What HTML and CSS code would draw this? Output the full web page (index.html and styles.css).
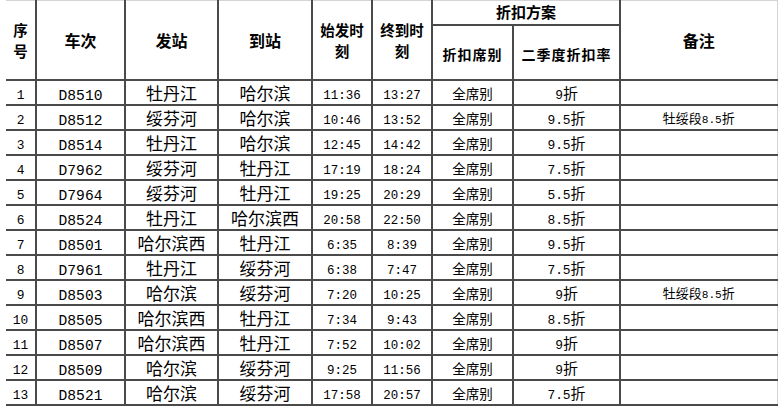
FILE: index.html
```html
<!DOCTYPE html>
<html lang="zh-CN">
<head>
<meta charset="utf-8">
<title>折扣方案</title>
<link rel="stylesheet" href="styles.css">
</head>
<body>
<table class="sheet">
  <colgroup>
    <col class="c1"><col class="c2"><col class="c3"><col class="c4"><col class="c5"><col class="c6"><col class="c7"><col class="c8"><col class="c9">
  </colgroup>
  <thead>
    <tr class="h1">
      <th rowspan="2" class="first two">序<br>号</th>
      <th rowspan="2">车次</th>
      <th rowspan="2">发站</th>
      <th rowspan="2">到站</th>
      <th rowspan="2" class="two">始发时<br>刻</th>
      <th rowspan="2" class="two">终到时<br>刻</th>
      <th colspan="2" class="plan">折扣方案</th>
      <th rowspan="2" class="last">备注</th>
    </tr>
    <tr class="h2">
      <th class="sub">折扣席别</th>
      <th class="sub">二季度折扣率</th>
    </tr>
  </thead>
  <tbody>
    <tr><td class="first seq"><span class="m">1</span></td><td class="big"><span class="m">D8510</span></td><td class="big">牡丹江</td><td class="big">哈尔滨</td><td class="time"><span class="m">11:36</span></td><td class="time"><span class="m">13:27</span></td><td class="seat">全席别</td><td class="rate"><span class="m">9</span>折</td><td class="last note"></td></tr>
    <tr><td class="first seq"><span class="m">2</span></td><td class="big"><span class="m">D8512</span></td><td class="big">绥芬河</td><td class="big">哈尔滨</td><td class="time"><span class="m">10:46</span></td><td class="time"><span class="m">13:52</span></td><td class="seat">全席别</td><td class="rate"><span class="m">9.5</span>折</td><td class="last note">牡绥段<span class="m">8.5</span>折</td></tr>
    <tr><td class="first seq"><span class="m">3</span></td><td class="big"><span class="m">D8514</span></td><td class="big">牡丹江</td><td class="big">哈尔滨</td><td class="time"><span class="m">12:45</span></td><td class="time"><span class="m">14:42</span></td><td class="seat">全席别</td><td class="rate"><span class="m">9.5</span>折</td><td class="last note"></td></tr>
    <tr><td class="first seq"><span class="m">4</span></td><td class="big"><span class="m">D7962</span></td><td class="big">绥芬河</td><td class="big">牡丹江</td><td class="time"><span class="m">17:19</span></td><td class="time"><span class="m">18:24</span></td><td class="seat">全席别</td><td class="rate"><span class="m">7.5</span>折</td><td class="last note"></td></tr>
    <tr><td class="first seq"><span class="m">5</span></td><td class="big"><span class="m">D7964</span></td><td class="big">绥芬河</td><td class="big">牡丹江</td><td class="time"><span class="m">19:25</span></td><td class="time"><span class="m">20:29</span></td><td class="seat">全席别</td><td class="rate"><span class="m">5.5</span>折</td><td class="last note"></td></tr>
    <tr><td class="first seq"><span class="m">6</span></td><td class="big"><span class="m">D8524</span></td><td class="big">牡丹江</td><td class="big">哈尔滨西</td><td class="time"><span class="m">20:58</span></td><td class="time"><span class="m">22:50</span></td><td class="seat">全席别</td><td class="rate"><span class="m">8.5</span>折</td><td class="last note"></td></tr>
    <tr><td class="first seq"><span class="m">7</span></td><td class="big"><span class="m">D8501</span></td><td class="big">哈尔滨西</td><td class="big">牡丹江</td><td class="time"><span class="m">6:35</span></td><td class="time"><span class="m">8:39</span></td><td class="seat">全席别</td><td class="rate"><span class="m">9.5</span>折</td><td class="last note"></td></tr>
    <tr><td class="first seq"><span class="m">8</span></td><td class="big"><span class="m">D7961</span></td><td class="big">牡丹江</td><td class="big">绥芬河</td><td class="time"><span class="m">6:38</span></td><td class="time"><span class="m">7:47</span></td><td class="seat">全席别</td><td class="rate"><span class="m">7.5</span>折</td><td class="last note"></td></tr>
    <tr><td class="first seq"><span class="m">9</span></td><td class="big"><span class="m">D8503</span></td><td class="big">哈尔滨</td><td class="big">绥芬河</td><td class="time"><span class="m">7:20</span></td><td class="time"><span class="m">10:25</span></td><td class="seat">全席别</td><td class="rate"><span class="m">9</span>折</td><td class="last note">牡绥段<span class="m">8.5</span>折</td></tr>
    <tr><td class="first seq"><span class="m">10</span></td><td class="big"><span class="m">D8505</span></td><td class="big">哈尔滨西</td><td class="big">牡丹江</td><td class="time"><span class="m">7:34</span></td><td class="time"><span class="m">9:43</span></td><td class="seat">全席别</td><td class="rate"><span class="m">8.5</span>折</td><td class="last note"></td></tr>
    <tr><td class="first seq"><span class="m">11</span></td><td class="big"><span class="m">D8507</span></td><td class="big">哈尔滨西</td><td class="big">牡丹江</td><td class="time"><span class="m">7:52</span></td><td class="time"><span class="m">10:02</span></td><td class="seat">全席别</td><td class="rate"><span class="m">9</span>折</td><td class="last note"></td></tr>
    <tr><td class="first seq"><span class="m">12</span></td><td class="big"><span class="m">D8509</span></td><td class="big">哈尔滨</td><td class="big">绥芬河</td><td class="time"><span class="m">9:25</span></td><td class="time"><span class="m">11:56</span></td><td class="seat">全席别</td><td class="rate"><span class="m">9</span>折</td><td class="last note"></td></tr>
    <tr><td class="first seq"><span class="m">13</span></td><td class="big"><span class="m">D8521</span></td><td class="big">哈尔滨</td><td class="big">绥芬河</td><td class="time"><span class="m">17:58</span></td><td class="time"><span class="m">20:57</span></td><td class="seat">全席别</td><td class="rate"><span class="m">7.5</span>折</td><td class="last note"></td></tr>
  </tbody>
</table>
</body>
</html>
```

FILE: styles.css
```css
html, body {
  margin: 0;
  padding: 0;
  background: #ffffff;
}

body {
  font-family: "Noto Sans CJK SC", sans-serif;
  color: #111111;
}

.sheet {
  margin-left: 6px;
  border-collapse: collapse;
  table-layout: fixed;
  width: 771px;
}

.c1 { width: 30px; }
.c2 { width: 89px; }
.c3 { width: 93px; }
.c4 { width: 94px; }
.c5 { width: 60px; }
.c6 { width: 60px; }
.c7 { width: 81px; }
.c8 { width: 107px; }
.c9 { width: 157px; }

.sheet th,
.sheet td {
  border: 2px solid #4a4a4a;
  padding: 0;
  text-align: center;
  overflow: hidden;
  white-space: nowrap;
}

.sheet thead tr.h1 th {
  border-top: 1px solid #d4d4d4;
}

.sheet .first {
  border-left: 0;
}

.sheet .last {
  border-right: 1px solid #d4d4d4;
}

.h1 { height: 24px; }
.h2 { height: 55px; }
.sheet tbody tr { height: 25px; }

.sheet th {
  font-weight: bold;
  font-size: 16px;
  line-height: 20px;
  color: #000000;
}

.sheet th.two {
  font-size: 14.5px;
  line-height: 21px;
}

.sheet th.plan {
  font-size: 15px;
  line-height: 18px;
}

.sheet th.sub {
  font-size: 14px;
  letter-spacing: 1px;
  padding-top: 4px;
}

.sheet td {
  font-weight: 400;
  line-height: 20px;
  height: 20px;
  vertical-align: bottom;
  padding-bottom: 1px;
  color: #000000;
}

.m {
  font-family: "Liberation Mono", monospace;
  font-size: 0.86em;
  line-height: 0;
}

.seq { font-size: 15px; }
.big { font-size: 17px; }
.time { font-size: 14.5px; }
.seat { font-size: 13.5px; }
.rate { font-size: 15px; }
.note { font-size: 13px; }
```
